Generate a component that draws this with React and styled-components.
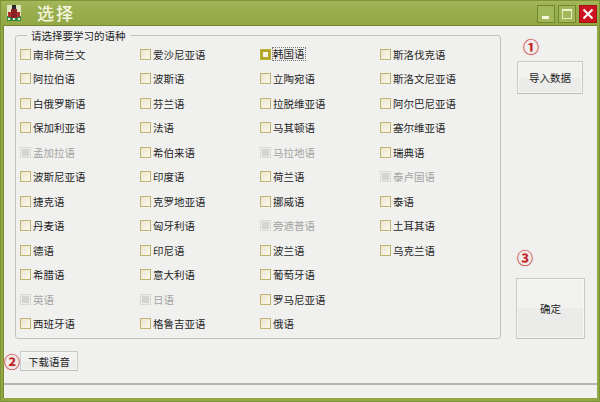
import React from "react";
import styled, { createGlobalStyle } from "styled-components";

const Global = createGlobalStyle`
  html, body { margin: 0; padding: 0; background: #94a84a; }
  * { box-sizing: border-box; }
`;
const FONT = `"Noto Sans CJK SC", "Liberation Sans", sans-serif`;

const Window = styled.div`
  width: 600px; height: 402px; display: flex; flex-direction: column;
  background: #93a845; border: 1px solid #7d9436; overflow: hidden;
  font-family: ${FONT}; color: #1f1f1f;
`;
const TitleBar = styled.div`
  height: 24px; display: flex; align-items: center; flex: none;
  padding: 0 2px 0 6px;
  background: linear-gradient(#a3b659 0, #9aae4e 40%, #93a845 100%);
`;
const AppIcon = styled.svg`width: 14px; height: 16px; flex: none;`;
const Title = styled.div`
  margin-left: 16px; font-size: 17px; letter-spacing: 2px; color: #f5f6df; font-weight: 500;
  line-height: 22px; flex: 1;
`;
const WinButtons = styled.div`display: flex; gap: 3px; margin-top: 2px;`;
const WinBtn = styled.div`
  width: 18px; height: 18px; display: flex; align-items: center; justify-content: center;
  border: 1px solid ${p => (p.$close ? "#a81018" : "#72882c")};
  background: ${p => (p.$close ? "#cc1420" : "#a2b65a")};
`;
const Content = styled.div`
  flex: 1; margin: 0 2px 3px 2px; display: flex; flex-direction: column;
  background: #f0f0ee; border-top: 1px solid #74892f; border-left: 1px solid #74892f; min-height: 0;
`;
const Main = styled.div`display: flex; height: 313px; flex: none;`;
const Group = styled.fieldset`
  margin: 2px 0 0 11px; padding: 0; width: 483px; height: 311px; flex: none;
  border: 1px solid #c0c0be; border-radius: 3px;
`;
const Legend = styled.legend`
  margin-left: 11px; padding: 0 4px; font-size: 10.5px; line-height: 15px; color: #1f1f1f;
`;
const Grid = styled.div`
  display: grid; grid-template-columns: repeat(4, 120px); grid-auto-rows: 24.5px;
  padding-left: 4px; margin-top: -1px;
`;
const Item = styled.div`
  display: flex; align-items: center; gap: 2px; font-size: 10.5px;
  color: ${p => (p.$off ? "#a4a4a2" : "#1f1f1f")};
`;
const Box = styled.span`
  width: 11px; height: 11px; flex: none; display: block;
  border: 1px solid ${p => (p.$off ? "#d8d8d6" : "#c0b470")};
  background: ${p => (p.$off ? "#d4d4d2" : "linear-gradient(135deg,#ece5cc,#faf8ee)")};
  box-shadow: ${p => (p.$off ? "inset 0 0 0 1px #ebebe9" : "none")};
`;
const FocusBox = styled.span`
  width: 11px; height: 11px; flex: none; display: flex; align-items: center; justify-content: center;
  background: #b3a52c; border: 1px solid #bdb030;
  &::after { content: ""; width: 5px; height: 5px; background: #f7f5e6; }
`;
const FocusLabel = styled.span`outline: 1px dotted #777; line-height: 12px;`;
const Side = styled.div`
  width: 94px; flex: none; display: flex; flex-direction: column; align-items: flex-start;
  padding-left: 16px;
`;
const Mark = styled.div`
  font-size: 16px; line-height: 18px; color: #bf2127; font-weight: 700;
  text-shadow: 0 0 2px #f0b0b0;
`;
const SideMarkOne = styled(Mark)`margin: 11px 0 0 6px;`;
const SideMarkThree = styled(Mark)`margin: 154px 0 0 0;`;
const Btn = styled.button`
  font-family: ${FONT}; font-size: 10.5px; color: #1f1f1f; padding: 0;
  border: 1px solid #c8c8c6; border-bottom-color: #bdbdbb; border-radius: 1px;
  background: linear-gradient(#f1f1ef 0 50%, #ebebe9 50% 100%);
  box-shadow: inset 0 0 0 1px #f6f6f4;
`;
const ImportBtn = styled(Btn)`width: 66px; height: 33px; margin-top: 6px;`;
const OkBtn = styled(Btn)`width: 69px; height: 62px; margin: 12px 0 0 -1px;`;
const Bottom = styled.div`display: flex; align-items: center; gap: 0; padding: 12px 0 0 0; flex: none;`;
const DownloadBtn = styled(Btn)`width: 58px; height: 20px;`;
const Status = styled.div`
  margin-top: auto; height: 15px; flex: none; background: #f1f1ef; border-top: 2px solid #b4b4b2;
`;

const rows = [
  ["南非荷兰文", "爱沙尼亚语", "韩国语*", "斯洛伐克语"],
  ["阿拉伯语", "波斯语", "立陶宛语", "斯洛文尼亚语"],
  ["白俄罗斯语", "芬兰语", "拉脱维亚语", "阿尔巴尼亚语"],
  ["保加利亚语", "法语", "马其顿语", "塞尔维亚语"],
  ["!孟加拉语", "希伯来语", "!马拉地语", "瑞典语"],
  ["波斯尼亚语", "印度语", "荷兰语", "!泰卢固语"],
  ["捷克语", "克罗地亚语", "挪威语", "泰语"],
  ["丹麦语", "匈牙利语", "!旁遮普语", "土耳其语"],
  ["德语", "印尼语", "波兰语", "乌克兰语"],
  ["希腊语", "意大利语", "葡萄牙语", ""],
  ["!英语", "!日语", "罗马尼亚语", ""],
  ["西班牙语", "格鲁吉亚语", "俄语", ""],
];

function Lang({ v }) {
  if (!v) return <div />;
  if (v.endsWith("*")) {
    return <Item><FocusBox /><FocusLabel>{v.slice(0, -1)}</FocusLabel></Item>;
  }
  const off = v.startsWith("!");
  return <Item $off={off}><Box $off={off} /><span>{off ? v.slice(1) : v}</span></Item>;
}

export default function App() {
  return (
    <>
      <Global />
      <Window>
        <TitleBar>
          <AppIcon viewBox="0 0 14 16">
            <rect x="0" y="0" width="14" height="16" fill="#dfe6c0" />
            <rect x="0" y="11" width="14" height="5" fill="#2f8a4a" />
            <rect x="1" y="7" width="4" height="5" fill="#b0302c" />
            <rect x="9" y="7" width="4" height="5" fill="#b0302c" />
            <rect x="4" y="4" width="6" height="9" fill="#8a2228" />
            <rect x="5" y="0" width="4" height="4" fill="#2b2430" />
            <rect x="1" y="13" width="2" height="2" fill="#e8e8d0" />
            <rect x="6" y="13" width="2" height="2" fill="#e8e8d0" />
            <rect x="11" y="13" width="2" height="2" fill="#e8e8d0" />
          </AppIcon>
          <Title>选择</Title>
          <WinButtons>
            <WinBtn>
              <svg width="16" height="16" viewBox="0 0 16 16"><rect x="4" y="10" width="7" height="3" fill="#f4f6dc" /></svg>
            </WinBtn>
            <WinBtn>
              <svg width="16" height="16" viewBox="0 0 16 16"><rect x="3.5" y="3.5" width="9" height="9" fill="none" stroke="#e6ecc0" /><rect x="3" y="3" width="10" height="2" fill="#eef2cc" /></svg>
            </WinBtn>
            <WinBtn $close>
              <svg width="16" height="16" viewBox="0 0 16 16"><path d="M3.5 3.5 L12.5 12.5 M12.5 3.5 L3.5 12.5" stroke="#fff" strokeWidth="2" /></svg>
            </WinBtn>
          </WinButtons>
        </TitleBar>
        <Content>
          <Main>
            <Group>
              <Legend>请选择要学习的语种</Legend>
              <Grid>
                {rows.flat().map((v, i) => <Lang key={i} v={v} />)}
              </Grid>
            </Group>
            <Side>
              <SideMarkOne>①</SideMarkOne>
              <ImportBtn>导入数据</ImportBtn>
              <SideMarkThree>③</SideMarkThree>
              <OkBtn>确定</OkBtn>
            </Side>
          </Main>
          <Bottom>
            <Mark>②</Mark>
            <DownloadBtn>下载语音</DownloadBtn>
          </Bottom>
          <Status />
        </Content>
      </Window>
    </>
  );
}
